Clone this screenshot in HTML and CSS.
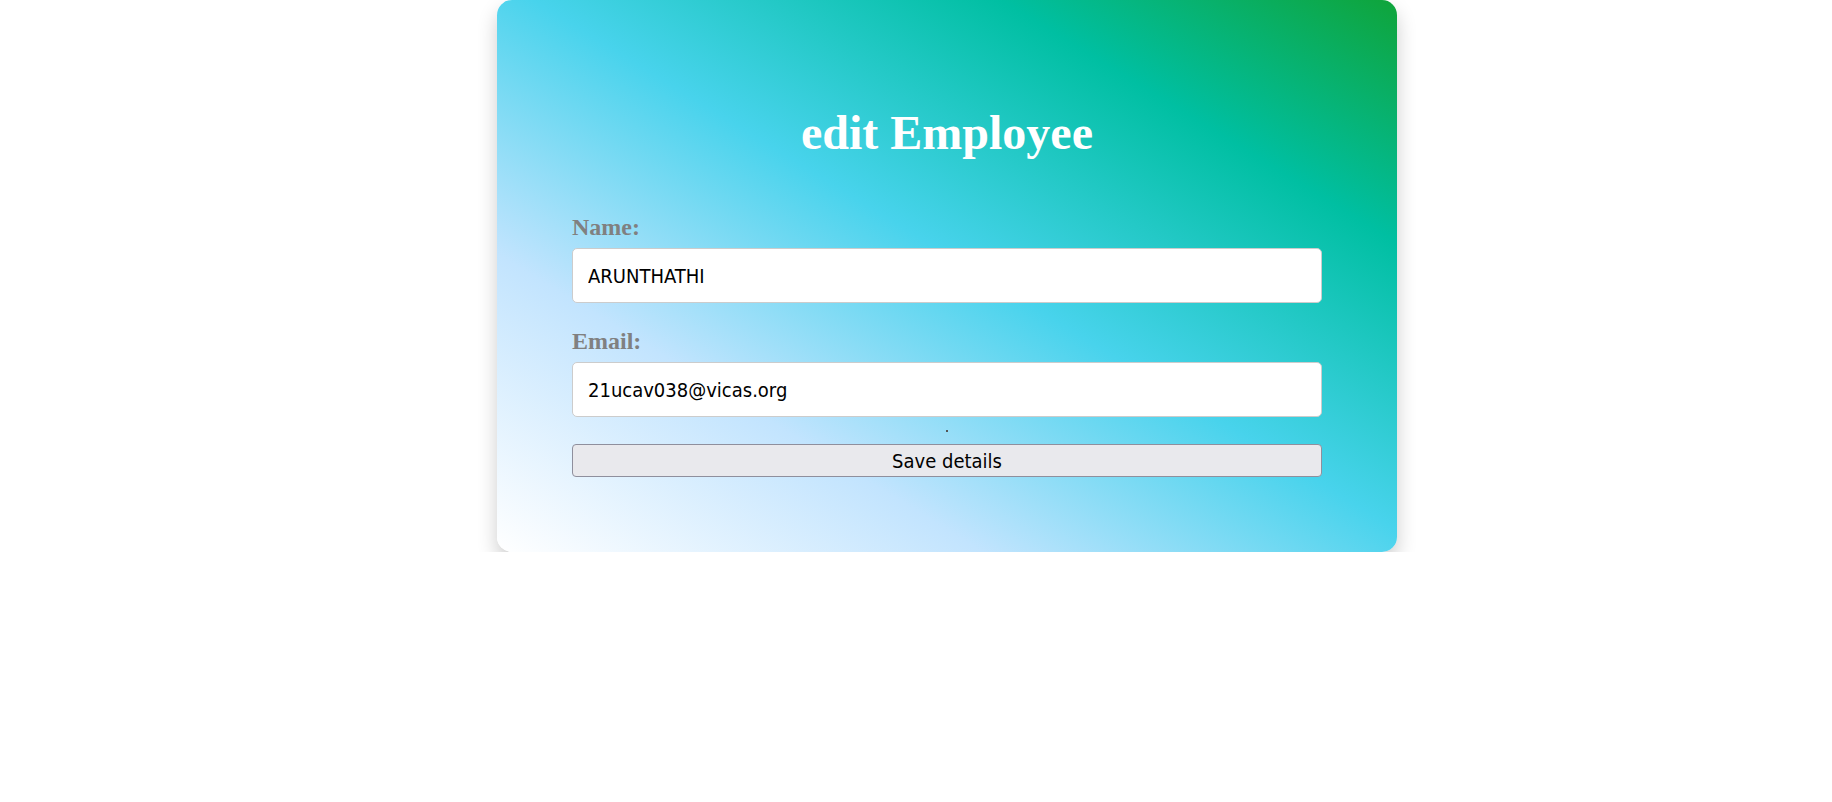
FILE: index.html
```html
<!DOCTYPE html>
<html lang="en">
<head>
<meta charset="utf-8">
<title>edit Employee</title>
<link rel="stylesheet" href="styles.css">
</head>
<body>
<div class="page">
  <div class="card">
    <h1 class="title">edit Employee</h1>
    <form class="form">
      <label class="label" for="name">Name:</label>
      <input class="input" id="name" type="text" value="ARUNTHATHI">
      <label class="label" for="email">Email:</label>
      <input class="input" id="email" type="email" value="21ucav038@vicas.org">
      <div class="dot"></div>
      <button class="btn" type="button">Save details</button>
    </form>
  </div>
</div>
</body>
</html>
```
FILE: styles.css
```css
html, body {
  margin: 0;
  padding: 0;
  background: #ffffff;
}

.page {
  padding-left: 62px;
}

.card {
  width: 750px;
  margin: 0 auto;
  padding: 0 75px 75px;
  border-radius: 15px;
  background: linear-gradient(to top right, #ffffff 0%, #c2e4fe 27%, #48d3ec 52%, #00bfa2 78%, #0fa43a 100%);
  box-shadow: 0 10px 20px rgba(0, 0, 0, 0.2);
}

.title {
  margin: 0;
  padding: 105px 0 53px;
  font-family: "Liberation Serif", "Times New Roman", serif;
  font-weight: bold;
  font-size: 48px;
  line-height: 55px;
  color: #ffffff;
  text-align: center;
}

.form {
  display: flex;
  flex-direction: column;
  margin: 0;
}

.label {
  display: block;
  font-family: "Liberation Serif", "Times New Roman", serif;
  font-weight: bold;
  font-size: 24px;
  line-height: 28px;
  color: #808080;
  margin-bottom: 7px;
}

.input {
  box-sizing: border-box;
  width: 100%;
  height: 55px;
  margin: 0 0 24px;
  padding: 0 15px;
  border: 1px solid #cccccc;
  border-radius: 5px;
  background: #ffffff;
  font-family: "DejaVu Sans Condensed", "DejaVu Sans", sans-serif;
  font-size: 20px;
  color: #000000;
  outline: none;
}

.input:last-of-type {
  margin-bottom: 0;
}

.dot {
  align-self: center;
  width: 2px;
  height: 2px;
  margin: 13px 0 12px;
  background: #555555;
}

.btn {
  box-sizing: border-box;
  width: 100%;
  height: 33px;
  padding: 0;
  border: 1px solid #8f8f9d;
  border-radius: 4px;
  background: #e9e9ed;
  font-family: "DejaVu Sans Condensed", "DejaVu Sans", sans-serif;
  font-size: 20px;
  color: #000000;
}
```
